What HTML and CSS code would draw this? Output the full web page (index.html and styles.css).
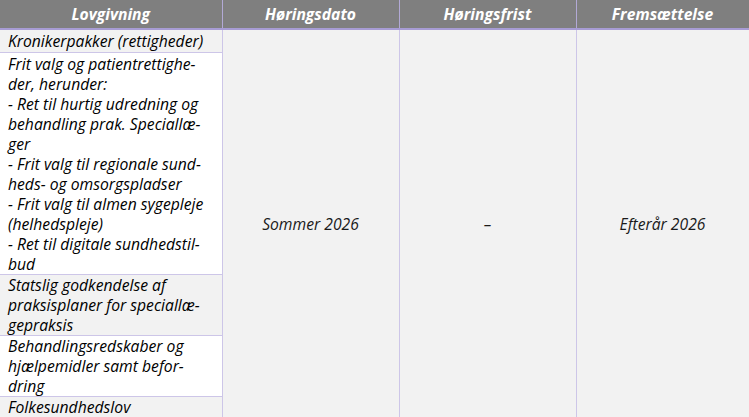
FILE: index.html
```html
<!DOCTYPE html>
<html lang="da">
<head>
<meta charset="utf-8">
<title>Lovgivning</title>
<link rel="stylesheet" href="styles.css">
</head>
<body>
<table class="plan">
  <colgroup>
    <col class="c-law">
    <col class="c-date">
    <col class="c-date">
    <col class="c-last">
  </colgroup>
  <thead>
    <tr>
      <th>Lovgivning</th>
      <th>Høringsdato</th>
      <th>Høringsfrist</th>
      <th>Fremsættelse</th>
    </tr>
  </thead>
  <tbody>
    <tr class="r1">
      <td class="law shade">Kronikerpakker (rettigheder)</td>
      <td class="merged" rowspan="5">Sommer 2026</td>
      <td class="merged" rowspan="5">–</td>
      <td class="merged" rowspan="5">Efterår 2026</td>
    </tr>
    <tr class="r2">
      <td class="law">Frit valg og patientrettighe-<br>der, herunder:<br>- Ret til hurtig udredning og<br>behandling prak. Speciallæ-<br>ger<br>- Frit valg til regionale sund-<br>heds- og omsorgspladser<br>- Frit valg til almen sygepleje<br>(helhedspleje)<br>- Ret til digitale sundhedstil-<br>bud</td>
    </tr>
    <tr>
      <td class="law shade">Statslig godkendelse af<br>praksisplaner for speciallæ-<br>gepraksis</td>
    </tr>
    <tr>
      <td class="law">Behandlingsredskaber og<br>hjælpemidler samt befor-<br>dring</td>
    </tr>
    <tr class="r5">
      <td class="law shade">Folkesundhedslov</td>
    </tr>
  </tbody>
</table>
</body>
</html>
```
FILE: styles.css
```css
html, body {
  margin: 0;
  padding: 0;
  background: #ffffff;
}
body {
  font-family: "Open Sans", "Liberation Sans", sans-serif;
  font-style: italic;
  font-size: 15.7px;
  color: #000;
}
.plan {
  border-collapse: collapse;
  table-layout: fixed;
  width: 749px;
}
.c-law { width: 222px; }
.c-date { width: 177px; }
.c-last { width: 173px; }
.plan th {
  background: #7f7f7f;
  color: #ffffff;
  font-weight: 700;
  font-style: italic;
  height: 28px;
  padding: 0;
  text-align: center;
  border-left: 1px solid #b2a9d6;
  border-right: 1px solid #b2a9d6;
  border-bottom: 2px solid #a79cd4;
}
.plan th:first-child { border-left: none; }
.plan td {
  padding: 0 8px;
  line-height: 20px;
  border: 1px solid #cdc6e8;
  vertical-align: top;
  white-space: nowrap;
}
.plan td.law {
  background: #ffffff;
  border-left: none;
}
.plan td.law.shade { background: #f2f2f2; }
.r1 td.law { height: 21px; padding-top: 1px; }
.r2 td.law { padding-top: 1px; }
.r5 td.law { height: 21px; }
.plan td.merged {
  background: #f2f2f2;
  text-align: center;
  vertical-align: middle;
  color: #1a1a1a;
}
```
